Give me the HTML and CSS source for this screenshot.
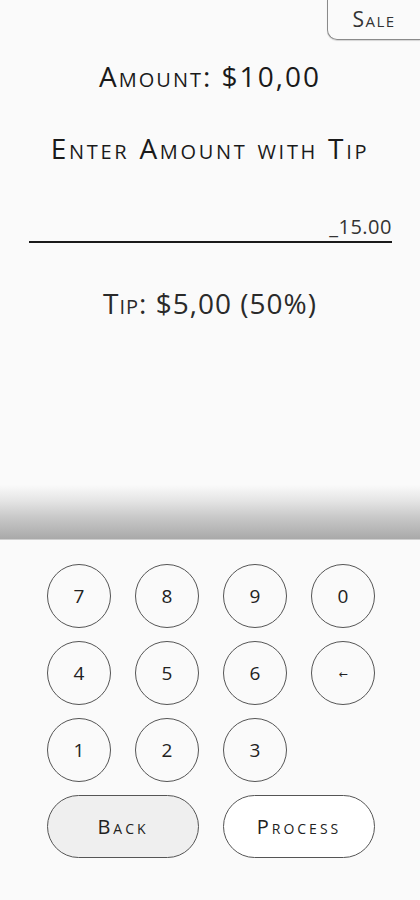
FILE: index.html
```html
<!DOCTYPE html>
<html lang="en">
<head>
    <meta charset="UTF-8">
    <meta name="viewport" content="width=device-width, initial-scale=1.0">
    <title>Enter Tip</title>
    <link rel="stylesheet" href="styles.css">
</head>
<body>

    <div class="screen">
        <div class="top">
            <div class="sale-row">
                <div class="sale">Sale</div>
            </div>
            <h1 class="amount">Amount: $10,00</h1>
            <h2 class="prompt">Enter Amount with Tip</h2>
            <div class="field">
                <span class="field-value">_15.00</span>
            </div>
            <p class="tip">Tip: $5,00 (50%)</p>
        </div>

        <div class="shade"></div>

        <div class="keypad">
            <button class="key">7</button>
            <button class="key">8</button>
            <button class="key">9</button>
            <button class="key">0</button>
            <button class="key">4</button>
            <button class="key">5</button>
            <button class="key">6</button>
            <button class="key key-del">&#8592;</button>
            <button class="key">1</button>
            <button class="key">2</button>
            <button class="key">3</button>
            <span></span>
            <button class="pill pill-back">Back</button>
            <button class="pill pill-process">Process</button>
        </div>
    </div>

</body>
</html>
```

FILE: styles.css
```css
body {
    font-family: "Open Sans", "DejaVu Sans", sans-serif;
    margin: 0;
    padding: 0;
    background: #fafafa;
    color: #1a1a1a;
}
.screen {
    width: 420px;
    height: 900px;
    display: flex;
    flex-direction: column;
}
.top {
    height: 485px;
    text-align: center;
}
.sale-row {
    display: flex;
    justify-content: flex-end;
}
.sale {
    width: 92px;
    height: 39px;
    border-left: 1px solid #8a8a8a;
    border-bottom: 1px solid #8a8a8a;
    border-bottom-left-radius: 10px;
    box-shadow: 0 1px 1px rgba(0, 0, 0, 0.15);
    font-variant: small-caps;
    font-size: 21px;
    line-height: 38px;
    letter-spacing: 1.5px;
    color: #333;
}
.amount, .prompt, .tip {
    font-weight: 400;
    font-variant: small-caps;
    font-size: 28px;
    line-height: 32px;
    margin: 0;
}
.amount {
    margin-top: 20px;
    letter-spacing: 2px;
}
.prompt {
    margin-top: 40px;
    letter-spacing: 2.7px;
}
.field {
    margin: 43px 28px 0 29px;
    height: 34px;
    border-bottom: 2px solid #1a1a1a;
    text-align: right;
}
.field-value {
    font-size: 20px;
    line-height: 40px;
    letter-spacing: 0.5px;
    color: #333;
}
.tip {
    margin-top: 44px;
    letter-spacing: 1px;
    color: #2a2a2a;
}
.shade {
    height: 54px;
    background: linear-gradient(#fafafa 0%, #e4e4e4 30%, #c8c8c8 60%, #a9a9a9 100%);
    border-bottom: 1px solid #cfcfcf;
}
.keypad {
    display: grid;
    grid-template-columns: repeat(4, 64px);
    grid-auto-rows: 64px;
    column-gap: 24px;
    row-gap: 13px;
    padding: 24px 0 0 47px;
}
.key {
    width: 64px;
    height: 64px;
    border: 1px solid #555;
    border-radius: 50%;
    background: #fafafa;
    font-family: "Open Sans", "DejaVu Sans", sans-serif;
    font-size: 19px;
    color: #222;
    padding: 0;
}
.key-del {
    font-size: 11px;
}
.pill {
    grid-column: span 2;
    height: 63px;
    border: 1px solid #555;
    border-radius: 32px;
    font-family: "Open Sans", "DejaVu Sans", sans-serif;
    font-variant: small-caps;
    font-size: 20px;
    letter-spacing: 3px;
    color: #222;
}
.pill-back {
    background: #efefef;
}
.pill-process {
    background: #fff;
}
```
